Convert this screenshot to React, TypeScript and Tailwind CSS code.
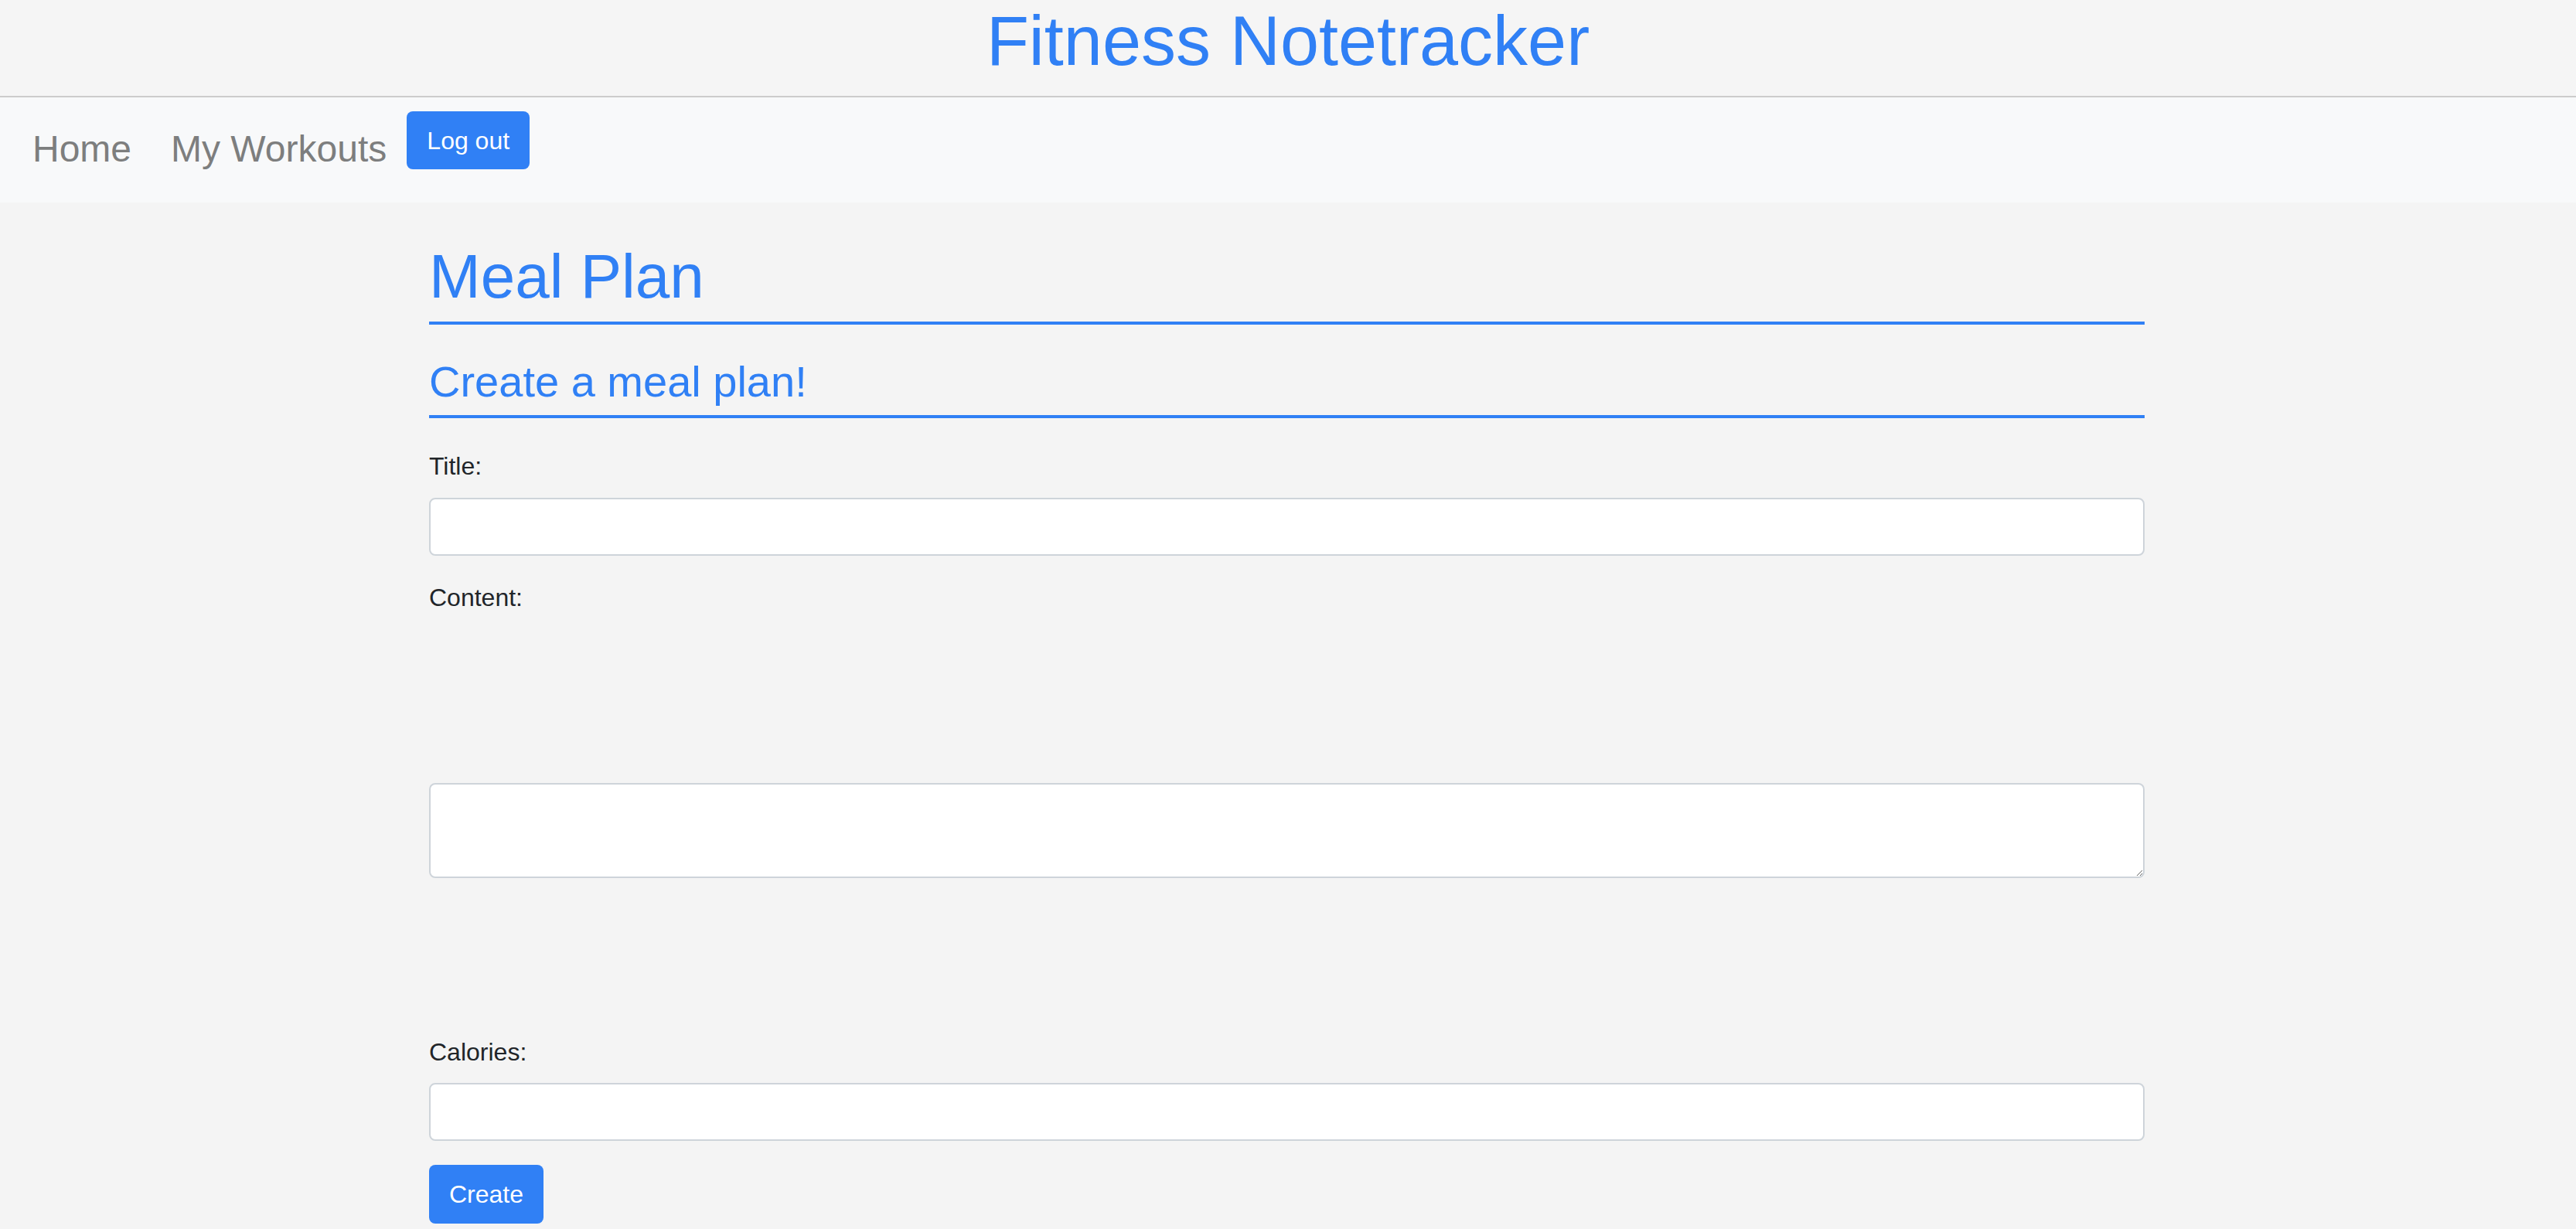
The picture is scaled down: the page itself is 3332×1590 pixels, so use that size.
import { useState } from "react";

const BLUE = "text-[#3080f5]";

export default function App() {
  const [title, setTitle] = useState("");
  const [content, setContent] = useState("");
  const [calories, setCalories] = useState("");

  return (
    <div className="min-h-screen bg-[#f4f4f4] font-['Liberation_Sans',Arial,sans-serif]">
      {/* Header */}
      <header className="h-[126px] border-b-2 border-[#cccccc] bg-[#f5f5f5] flex justify-center">
        <h1 className={`pt-[8px] text-[90px] leading-[90px] font-normal ${BLUE}`}>
          Fitness Notetracker
        </h1>
      </header>

      {/* Nav */}
      <nav className="h-[136px] bg-[#f8f9fa] flex items-start pl-[42px]">
        <a href="#" className="pt-[43px] text-[48px] leading-[48px] text-[#7d7e7e]">
          Home
        </a>
        <a href="#" className="ml-[51px] pt-[43px] text-[48px] leading-[48px] text-[#7d7e7e]">
          My Workouts
        </a>
        <button className="ml-[26px] mt-[18px] h-[75px] w-[159px] rounded-[8px] bg-[#3080f5] text-[32px] leading-[32px] text-white">
          Log out
        </button>
      </nav>

      {/* Main */}
      <div className="pr-[3px]">
        <main className="mx-auto w-[2219px]">
          <h2 className={`pt-[56px] pb-[18px] border-b-4 border-[#3080f5] text-[80px] leading-[80px] font-normal ${BLUE}`}>
            Meal Plan
          </h2>
          <h3 className={`mt-[46px] pb-[15px] border-b-4 border-[#3080f5] text-[56px] leading-[56px] font-normal ${BLUE}`}>
            Create a meal plan!
          </h3>

          <form className="flex flex-col" onSubmit={(e) => e.preventDefault()}>
            <label className="mt-[46px] text-[32px] leading-[32px] text-[#212529]">Title:</label>
            <input
              value={title}
              onChange={(e) => setTitle(e.target.value)}
              className="mt-[25px] h-[75px] w-full rounded-[8px] border-2 border-[#ced4da] bg-white px-4 text-[32px] outline-none"
            />

            <label className="mt-[38px] text-[32px] leading-[32px] text-[#212529]">Content:</label>
            <textarea
              value={content}
              onChange={(e) => setContent(e.target.value)}
              className="mt-[224px] h-[123px] w-full rounded-[8px] border-2 border-[#ced4da] bg-white px-4 text-[32px] outline-none"
            />

            <label className="mt-[209px] text-[32px] leading-[32px] text-[#212529]">Calories:</label>
            <input
              value={calories}
              onChange={(e) => setCalories(e.target.value)}
              className="mt-[24px] h-[75px] w-full rounded-[8px] border-2 border-[#ced4da] bg-white px-4 text-[32px] outline-none"
            />

            <div>
              <button
                type="submit"
                className="mt-[31px] h-[76px] w-[148px] rounded-[8px] bg-[#3080f5] text-[32px] leading-[32px] text-white"
              >
                Create
              </button>
            </div>
          </form>
        </main>
      </div>
    </div>
  );
}
